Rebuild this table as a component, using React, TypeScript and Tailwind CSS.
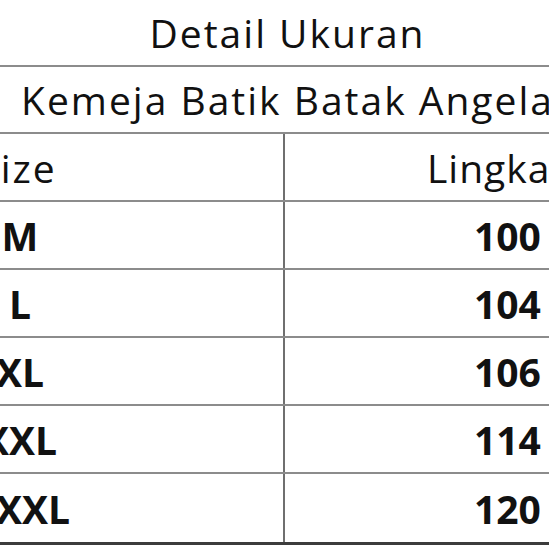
import React from "react";

const rows = [
  { s: "M", v: "100" },
  { s: "L", v: "104" },
  { s: "XL", v: "106" },
  { s: "XXL", v: "114" },
  { s: "XXXL", v: "120" },
];

export default function App() {
  return (
    <div
      className="w-[549px] h-[548px] overflow-hidden bg-white text-[#111]"
      style={{ fontFamily: '"Open Sans", "Noto Sans", sans-serif' }}
    >
      <div className="h-[67px] pl-[26px] border-b-2 border-[#8c8c8c] flex items-center justify-center text-[39px] tracking-[2px] leading-none whitespace-nowrap">
        Detail Ukuran
      </div>
      <div className="h-[67px] pl-[26px] border-b-2 border-[#8c8c8c] flex items-center justify-center text-[39px] tracking-[2px] leading-none whitespace-nowrap">
        Kemeja Batik Batak Angela
      </div>
      <div className="h-[68px] border-b-2 border-[#8c8c8c] flex text-[39px] tracking-[2px] leading-none whitespace-nowrap">
        <div className="w-[285px] shrink-0 border-r-2 border-[#6f6f6f] flex items-center">
          <div className="w-[34px] flex justify-center">Size</div>
        </div>
        <div className="flex items-center pl-[142px] tracking-[1px]">Lingkar Dada</div>
      </div>
      {rows.map((r, i) => (
        <div
          key={r.s}
          className={
            i === rows.length - 1
              ? "h-[71px] border-b-[3px] border-[#3c3c3c] flex text-[39px] font-bold leading-none whitespace-nowrap"
              : "h-[68px] border-b-2 border-[#8c8c8c] flex text-[39px] font-bold leading-none whitespace-nowrap"
          }
        >
          <div className="w-[285px] shrink-0 border-r-2 border-[#6f6f6f] flex items-center">
            <div className="w-[40px] flex justify-center">{r.s}</div>
          </div>
          <div className="flex items-center pl-[189px]">{r.v}</div>
        </div>
      ))}
    </div>
  );
}
